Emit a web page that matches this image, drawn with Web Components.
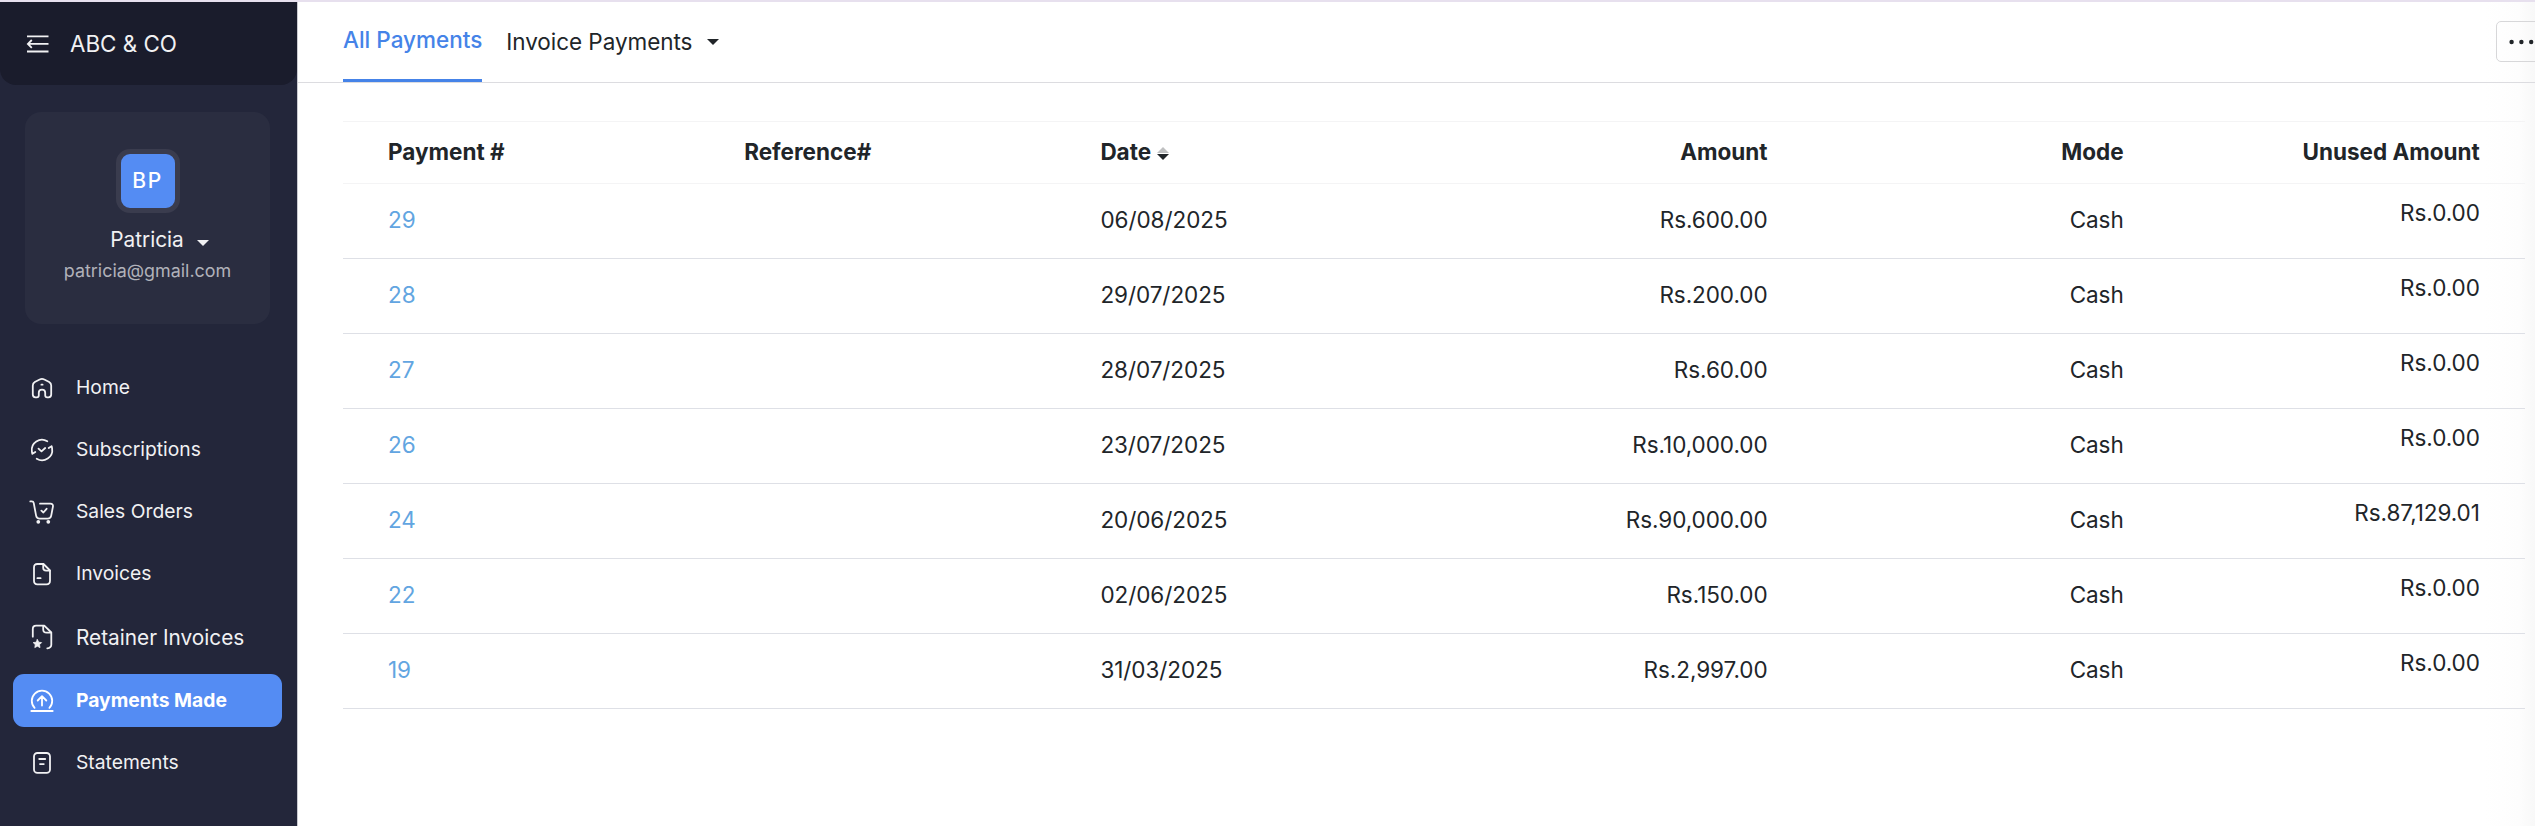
<!DOCTYPE html>
<html lang="en">
<head>
<meta charset="utf-8">
<title>Payments Made</title>
<style>
    html, body{
        margin: 0;
        height: 100%;
        overflow: hidden;
    }
    body{
        font-family: Inter, "Liberation Sans", sans-serif;
        color: #212529;
        background: #fff;
    }
</style>
</head>
<body>
<portal-shell>
    <portal-sidebar slot="sidebar" company="ABC &amp; CO">
        <portal-profile slot="profile" initials="BP" name="Patricia" email="patricia@gmail.com"></portal-profile>
        <portal-nav-item icon="home">Home</portal-nav-item>
        <portal-nav-item icon="subscriptions">Subscriptions</portal-nav-item>
        <portal-nav-item icon="cart">Sales Orders</portal-nav-item>
        <portal-nav-item icon="invoice">Invoices</portal-nav-item>
        <portal-nav-item icon="retainer" large>Retainer Invoices</portal-nav-item>
        <portal-nav-item icon="payments" active>Payments Made</portal-nav-item>
        <portal-nav-item icon="statement">Statements</portal-nav-item>
    </portal-sidebar>
    <portal-tabs>
        <span slot="active">All Payments</span>
        <span slot="other">Invoice Payments</span>
    </portal-tabs>
    <payments-table></payments-table>
</portal-shell>

<script>
// Inner markup of the sidebar icons, all drawn on a 24 x 24 grid
const ICONS = {
    home: `<path d="M2.8 9.6c0-1.6.6-2.7 2-3.6l4.9-2.5c1.5-.7 3.1-.7 4.6 0L19.2 6c1.4.9 2 2 2 3.6v9c0 1.7-1 2.7-2.7 2.7h-1.2c-1.3 0-2.1-.8-2.1-2.1v-2.4c0-2-1.2-3.1-3.2-3.1s-3.2 1.1-3.2 3.1v2.4c0 1.3-.8 2.1-2.1 2.1H5.5c-1.7 0-2.7-1-2.7-2.7z"/><path d="M11.4 8.7h1.2"/>`,
    subscriptions: `<path d="M17.3 3.2A10.2 10.2 0 0 0 1.9 13.5c.1 1 .3 1.8.5 2.3l2.9-1.9M6.7 20.8A10.2 10.2 0 0 0 22.1 10.5c-.1-1-.3-1.8-.5-2.3l-2.9 1.9"/><path d="M8.5 10.6l3 2.8 3.7-3.4"/>`,
    cart: `<path d="M.3 1.4h1.5c1.1 0 1.7.5 1.9 1.5l2.4 12.7c.4 2 1.5 3 3.5 3h8.1c2 0 3.1-1 3.5-3l1.7-8.8c.4-2-.5-3.1-2.5-3.1H10"/><path d="M11.4 10.7l2 1.8 3.2-3.7"/><circle cx="8.3" cy="21.8" r="1" fill="currentColor"/><circle cx="18.3" cy="21.8" r="1" fill="currentColor"/>`,
    invoice: `<path d="M7.3 2h6.2L20 8.5V18.800c0 2.300-1.200 3.500-3.500 3.500H7.400C5.100 22.300 4 21.100 4 18.800V5.400C4 3.200 5.100 2 7.300 2z"/><path d="M13.200 2.200v3.600c0 1.900 1 2.900 2.900 2.900h3.700"/><path d="M7.400 16.200h3.200"/>`,
    retainer: `<path d="M2.800 11.700V4c0-2.100 1.200-3.300 3.300-3.300h8.200l7 6.800v12.200c0 2.100-1.200 3.300-4 3.600"/><path d="M13.200.9v3.300c0 2.300 1.200 3.500 3.500 3.500h4.400"/><path fill="currentColor" stroke-width=".8" d="M7.400 14.600l1.300 2.600 2.900.4-2.100 2.100.5 2.900-2.600-1.400-2.600 1.400.5-2.900-2.100-2.100 2.900-.4z"/>`,
    payments: `<path d="M4.600 18.900a10.200 10.200 0 1 1 14.800 0"/><path d="M1.300 22h21.400M12 16.600V7.400M7.700 11.500L12 7.200l4.300 4.300"/>`,
    statement: `<rect x="4" y="2" width="16" height="19.800" rx="3.400"/><path d="M9.200 8h6M10 13.100h3.800"/>`
};

class PortalShell extends HTMLElement {
    constructor (){
        super();
        this.attachShadow({mode: 'open'}).innerHTML = `
            <style>
                :host{
                    display: grid;
                    grid-template-columns: 298px minmax(0, 1fr);
                    height: 100vh;
                    box-sizing: border-box;
                    border-top: 2px solid #e7e0ee;
                }
                main{
                    background: linear-gradient(to left, #f8f8f8, #fdfdfd 16px, #fff 50px);
                    min-width: 0;
                    overflow: hidden;
                }
            </style>
            <slot name="sidebar"></slot>
            <main><slot></slot></main>
        `;
    }
}
customElements.define('portal-shell', PortalShell);

class PortalSidebar extends HTMLElement {
    constructor (){
        super();
        this.attachShadow({mode: 'open'}).innerHTML = `
            <style>
                :host{
                    display: flex;
                    flex-direction: column;
                    box-sizing: border-box;
                    color: #f1f1f3;
                    background: #23263a;
                    border-right: 1px solid #c9cad0;
                }
                header{
                    display: flex;
                    align-items: center;
                    gap: 21px;
                    height: 83px;
                    padding: 0 0 0 26px;
                    box-sizing: border-box;
                    background: #1a1c2c;
                    border-radius: 0 0 16px 16px;
                    font-size: 22.4px;
                    font-weight: 430;
                }
                #company{
                    padding-bottom: 1px;
                }
                nav{
                    display: flex;
                    flex-direction: column;
                    gap: 9px;
                    padding: 37px 15px 0 13px;
                }
            </style>
            <header>
                <svg width="23" height="18" viewBox="0 0 23 18" fill="none" stroke="currentColor" stroke-width="1.8">
                    <path d="M1 1.3h21.5M2 8.9h20.5M1 16.5h21.5M5.8 5L1.9 8.9l3.9 3.9"/>
                </svg>
                <span id="company"></span>
            </header>
            <slot name="profile"></slot>
            <nav><slot></slot></nav>
        `;
        this.shadowRoot.getElementById('company').textContent = this.getAttribute('company');
    }
}
customElements.define('portal-sidebar', PortalSidebar);

class PortalProfile extends HTMLElement {
    constructor (){
        super();
        this.attachShadow({mode: 'open'}).innerHTML = `
            <style>
                :host{
                    display: flex;
                    flex-direction: column;
                    align-items: center;
                    box-sizing: border-box;
                    width: 245px;
                    height: 212px;
                    margin: 27px 0 0 25px;
                    padding-top: 37px;
                    border-radius: 16px;
                    background: #2a2d40;
                }
                .avatar{
                    width: 54px;
                    height: 54px;
                    border: 5px solid #3a3c4e;
                    border-radius: 14px;
                    background: #548cf3;
                    color: #fff;
                    font-size: 21px;
                    font-weight: 450;
                    letter-spacing: 1.5px;
                    line-height: 54px;
                    text-align: center;
                }
                .name{
                    display: flex;
                    align-items: center;
                    gap: 13px;
                    margin: 12px 0 0 24px;
                    font-size: 20.8px;
                    font-weight: 430;
                    line-height: 30px;
                }
                .name svg{
                    margin-top: 5px;
                }
                .email{
                    font-size: 17.9px;
                    line-height: 28px;
                    margin-top: 2px;
                    color: #b1b2ba;
                }
            </style>
            <div class="avatar">${this.getAttribute('initials')}</div>
            <div class="name">
                ${this.getAttribute('name')}
                <svg width="12" height="6" viewBox="0 0 12 6"><path fill="currentColor" d="M0 0h12L6 6z"/></svg>
            </div>
            <div class="email">${this.getAttribute('email')}</div>
        `;
    }
}
customElements.define('portal-profile', PortalProfile);

class PortalNavItem extends HTMLElement {
    constructor (){
        super();
        this.attachShadow({mode: 'open'}).innerHTML = `
            <style>
                :host{
                    display: flex;
                    align-items: center;
                    gap: 22px;
                    height: 53px;
                    padding-left: 17px;
                    border-radius: 11px;
                    font-size: 19.3px;
                    font-weight: 430;
                }
                :host([large]){
                    height: 56px;
                    font-size: 20.8px;
                }
                :host([active]){
                    background: #548cf3;
                    color: #fff;
                    font-weight: 650;
                }
                svg{
                    flex: none;
                    overflow: visible;
                }
                span{
                    padding-bottom: 2px;
                }
                :host([large]) span{
                    padding-bottom: 0;
                }
            </style>
            <svg width="24" height="24" viewBox="0 0 24 24" fill="none" stroke="currentColor" stroke-width="1.8" stroke-linecap="round" stroke-linejoin="round">
                ${ICONS[this.getAttribute('icon')]}
            </svg>
            <span><slot></slot></span>
        `;
    }
}
customElements.define('portal-nav-item', PortalNavItem);

class PortalTabs extends HTMLElement {
    constructor (){
        super();
        this.attachShadow({mode: 'open'}).innerHTML = `
            <style>
                :host{
                    display: flex;
                    gap: 24px;
                    height: 80px;
                    padding-left: 45px;
                    border-bottom: 1px solid #dcdce0;
                    font-size: 22.5px;
                    line-height: 30px;
                }
                .active{
                    box-sizing: border-box;
                    padding-top: 23px;
                    border-bottom: 3px solid #4583e8;
                    color: #4583e8;
                    font-weight: 500;
                    white-space: nowrap;
                }
                .other{
                    display: flex;
                    align-items: center;
                    gap: 15px;
                    height: 30px;
                    margin-top: 25px;
                    letter-spacing: -.05px;
                    white-space: nowrap;
                }
                button{
                    flex: none;
                    width: 56px;
                    height: 41px;
                    margin: 19px -17px 0 auto;
                    padding: 0 0 0 12px;
                    border: 1px solid #d7d7d9;
                    border-radius: 5px;
                    background: none;
                    color: inherit;
                    text-align: left;
                }
                button svg{
                    display: block;
                }
            </style>
            <div class="active"><slot name="active"></slot></div>
            <div class="other">
                <slot name="other"></slot>
                <svg width="12" height="6" viewBox="0 0 12 6"><path fill="currentColor" d="M0 0h12L6 6z"/></svg>
            </div>
            <button aria-label="More">
                <svg width="26" height="6" viewBox="0 0 26 6" fill="currentColor">
                    <circle cx="2.6" cy="3" r="2.2"/><circle cx="12.4" cy="3" r="2.2"/><circle cx="22.2" cy="3" r="2.2"/>
                </svg>
            </button>
        `;
    }
}
customElements.define('portal-tabs', PortalTabs);

const PAYMENTS = [
    {number: 29, date: '06/08/2025', amount: 'Rs.600.00', mode: 'Cash', unused: 'Rs.0.00'},
    {number: 28, date: '29/07/2025', amount: 'Rs.200.00', mode: 'Cash', unused: 'Rs.0.00'},
    {number: 27, date: '28/07/2025', amount: 'Rs.60.00', mode: 'Cash', unused: 'Rs.0.00'},
    {number: 26, date: '23/07/2025', amount: 'Rs.10,000.00', mode: 'Cash', unused: 'Rs.0.00'},
    {number: 24, date: '20/06/2025', amount: 'Rs.90,000.00', mode: 'Cash', unused: 'Rs.87,129.01'},
    {number: 22, date: '02/06/2025', amount: 'Rs.150.00', mode: 'Cash', unused: 'Rs.0.00'},
    {number: 19, date: '31/03/2025', amount: 'Rs.2,997.00', mode: 'Cash', unused: 'Rs.0.00'}
];

class PaymentsTable extends HTMLElement {
    constructor (){
        super();
        this.attachShadow({mode: 'open'}).innerHTML = `
            <style>
                :host{
                    display: block;
                    margin: 38px 10px 0 45px;
                    font-size: 22.5px;
                    line-height: 30px;
                }
                .row{
                    display: grid;
                    grid-template-columns: 356.2px 356.2px 401px repeat(3, 356.17px);
                    height: 74px;
                    border-bottom: 1px solid #dee0e6;
                    align-items: center;
                }
                .row > *{
                    padding: 0 45px 2px;
                    letter-spacing: -.06px;
                }
                .head{
                    height: 61px;
                    border-top: 1px solid #f4f4f5;
                    border-bottom-color: #f4f4f5;
                    font-weight: 700;
                }
                .head > *{
                    letter-spacing: 0;
                }
                .right{
                    text-align: right;
                }
                .row > .raised{
                    padding-bottom: 16px;
                }
                a{
                    color: #62a5e1;
                    text-decoration: none;
                }
                .sort{
                    margin-left: 6px;
                }
            </style>
            <div class="row head">
                <div>Payment #</div>
                <div>Reference#</div>
                <div>Date<svg class="sort" width="12" height="13" viewBox="0 0 12 13"><path fill="#bfc0c1" d="M6 0l6 6H0z"/><path fill="#212529" d="M0 7h12l-6 6z"/></svg></div>
                <div class="right">Amount</div>
                <div class="right">Mode</div>
                <div class="right">Unused Amount</div>
            </div>
            ${PAYMENTS.map(payment => `
                <div class="row">
                    <a>${payment.number}</a>
                    <div></div>
                    <div>${payment.date}</div>
                    <div class="right">${payment.amount}</div>
                    <div class="right">${payment.mode}</div>
                    <div class="right raised">${payment.unused}</div>
                </div>
            `).join('')}
        `;
    }
}
customElements.define('payments-table', PaymentsTable);
</script>
</body>
</html>
